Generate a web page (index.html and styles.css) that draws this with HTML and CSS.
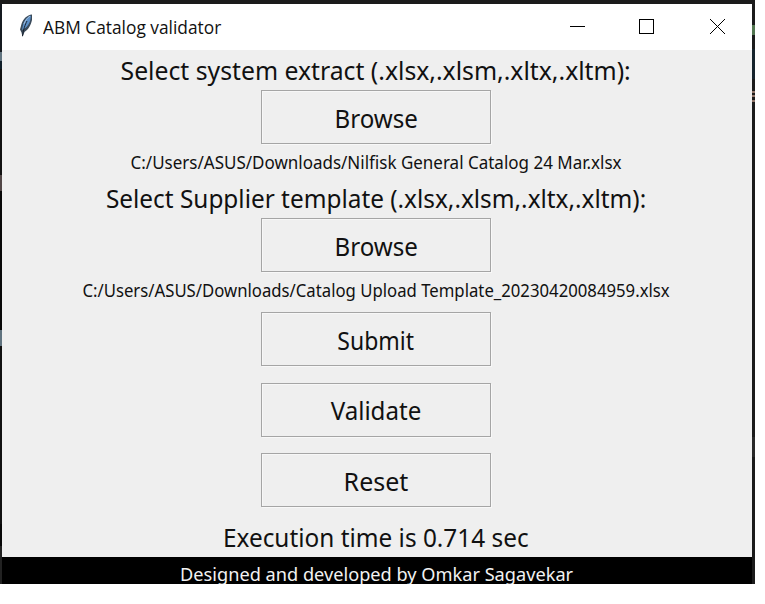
FILE: index.html
```html
<!DOCTYPE html>
<html lang="en">
<head>
<meta charset="utf-8">
<title>ABM Catalog validator</title>
<link rel="stylesheet" href="styles.css">
</head>
<body>
<div class="desktop">
  <div class="edge edge-left"></div>
  <main class="window">
    <header class="titlebar">
      <svg class="feather" width="16" height="26" viewBox="0 0 16 26">
        <path d="M14 1.500C9 2 5 6 3.500 11L2 16.500 3.500 19.500 4.500 24 6.500 19C10 17 13 12 14 7Z" fill="#3a4a5a"/>
        <path d="M13 2.500C9 4 6 8 5 12L4 17C9 15 12 10 12.500 6Z" fill="#5c90c8"/>
        <path d="M9 8C7 12 5.500 16 4.500 23" fill="none" stroke="#17202b" stroke-width="1"/>
        <path d="M12 3C9 5 7 8 6 11" fill="none" stroke="#a4c0de" stroke-width="1"/>
      </svg>
      <h1 class="title"><span>ABM Catalog validator</span></h1>
      <svg class="controls" width="155" height="15" viewBox="0 0 155 15" fill="none" stroke="#000" shape-rendering="crispEdges">
        <path d="M0 7.500H15M69.500 .5H83.500V14.500H69.500Z"/>
        <path d="M140 0L155 15M155 0L140 15" shape-rendering="auto"/>
      </svg>
    </header>
    <section class="content">
      <p class="label extract"><span>Select system extract (.xlsx,.xlsm,.xltx,.xltm):</span></p>
      <button class="button"><span class="browse">Browse</span></button>
      <p class="path"><span class="path-extract">C:/Users/ASUS/Downloads/Nilfisk General Catalog 24 Mar.xlsx</span></p>
      <p class="label supplier"><span>Select Supplier template (.xlsx,.xlsm,.xltx,.xltm):</span></p>
      <button class="button"><span class="browse">Browse</span></button>
      <p class="path"><span class="path-supplier">C:/Users/ASUS/Downloads/Catalog Upload Template_20230420084959.xlsx</span></p>
      <div class="actions">
        <button class="button"><span class="submit">Submit</span></button>
        <button class="button"><span class="validate">Validate</span></button>
        <button class="button"><span class="reset">Reset</span></button>
      </div>
      <p class="label status"><span>Execution time is 0.714 sec</span></p>
    </section>
    <footer class="credit"><span>Designed and developed by Omkar Sagavekar</span></footer>
  </main>
  <div class="edge edge-right"></div>
</div>
</body>
</html>
```
FILE: styles.css
```css
* { box-sizing: border-box; }
body { margin: 0; background: #fff; color: #111; font-family: "Noto Sans", sans-serif; overflow: hidden; }
p, h1 { margin: 0; font-weight: 400; white-space: nowrap; }
span { display: inline-block; }
.desktop { display: grid; grid-template-columns: 2px 750px 3px; width: 755px; height: 584px; padding-top: 4px; background: #1b1b1b; }
.edge-left { background: linear-gradient(#151a20 0 48px, #60737f 48px 57px, #101e29 57px 65px, #111 65px 171px, #514646 171px 187px, #080808 187px 326px, #60737f 326px 342px, #111 342px 520px, #080808 520px 542px, #222 542px); }
.edge-right { background: linear-gradient(#1b1b1b 0 21px, #527650 21px 31px, #1b1b1b 31px 45px, #16232c 45px 75px, #1b1b1b 75px 87px, #91766a 87px 89px, #1b1b1b 89px 91px, #91766a 91px 93px, #1b1b1b 93px 96px, #91766a 96px 98px, #1b1b1b 98px 433px, #292929 433px 453px, #1b1b1b 453px); }
.window { display: flex; flex-direction: column; height: 580px; background: #efefef; overflow: hidden; }
.titlebar { display: flex; align-items: center; height: 46px; flex: none; padding: 0 27px 0 16px; background: #fff; }
.feather { margin-bottom: 2px; }
.title { margin-left: 9px; font: 18px/26px "Open Sans", sans-serif; }
.title span { transform: scaleX(.963); transform-origin: left; }
.controls { margin-left: auto; margin-bottom: 1px; }
.content { display: flex; flex-direction: column; align-items: center; height: 507px; flex: none; padding-right: 2px; }
.label { height: 40px; font-size: 25px; line-height: 41px; }
.path { height: 34px; font-size: 18px; line-height: 36px; }
.supplier { line-height: 40px; }
.extract span { transform: scaleX(.99); }
.supplier span { transform: scaleX(.975); }
.path-extract { transform: scaleX(.944); }
.path-supplier { transform: scaleX(.929); }
.button { display: flex; align-items: center; justify-content: center; width: 230px; height: 54px; flex: none; padding: 1px 0 0; border: 1px solid #a5a5a5; border-radius: 0; background: #efefef; color: #111; font: 25px/30px "Noto Sans", sans-serif; box-shadow: 1px 1px #f8f8f8, inset 1px 1px #f7f7f7; }
.browse { transform: scaleX(.965); }
.submit { transform: scaleX(.92); }
.validate { transform: scaleX(.965); }
.actions { display: flex; flex-direction: column; gap: 16.500px; margin-top: 6px; }
.status { height: 50px; line-height: 60px; }
.status span { transform: scaleX(.975); }
.credit { height: 27px; flex: none; background: #000; color: #f2f2f2; text-align: center; font-size: 18px; line-height: 35px; white-space: nowrap; overflow: hidden; }
.credit span { transform: scaleX(1.01); }
```
